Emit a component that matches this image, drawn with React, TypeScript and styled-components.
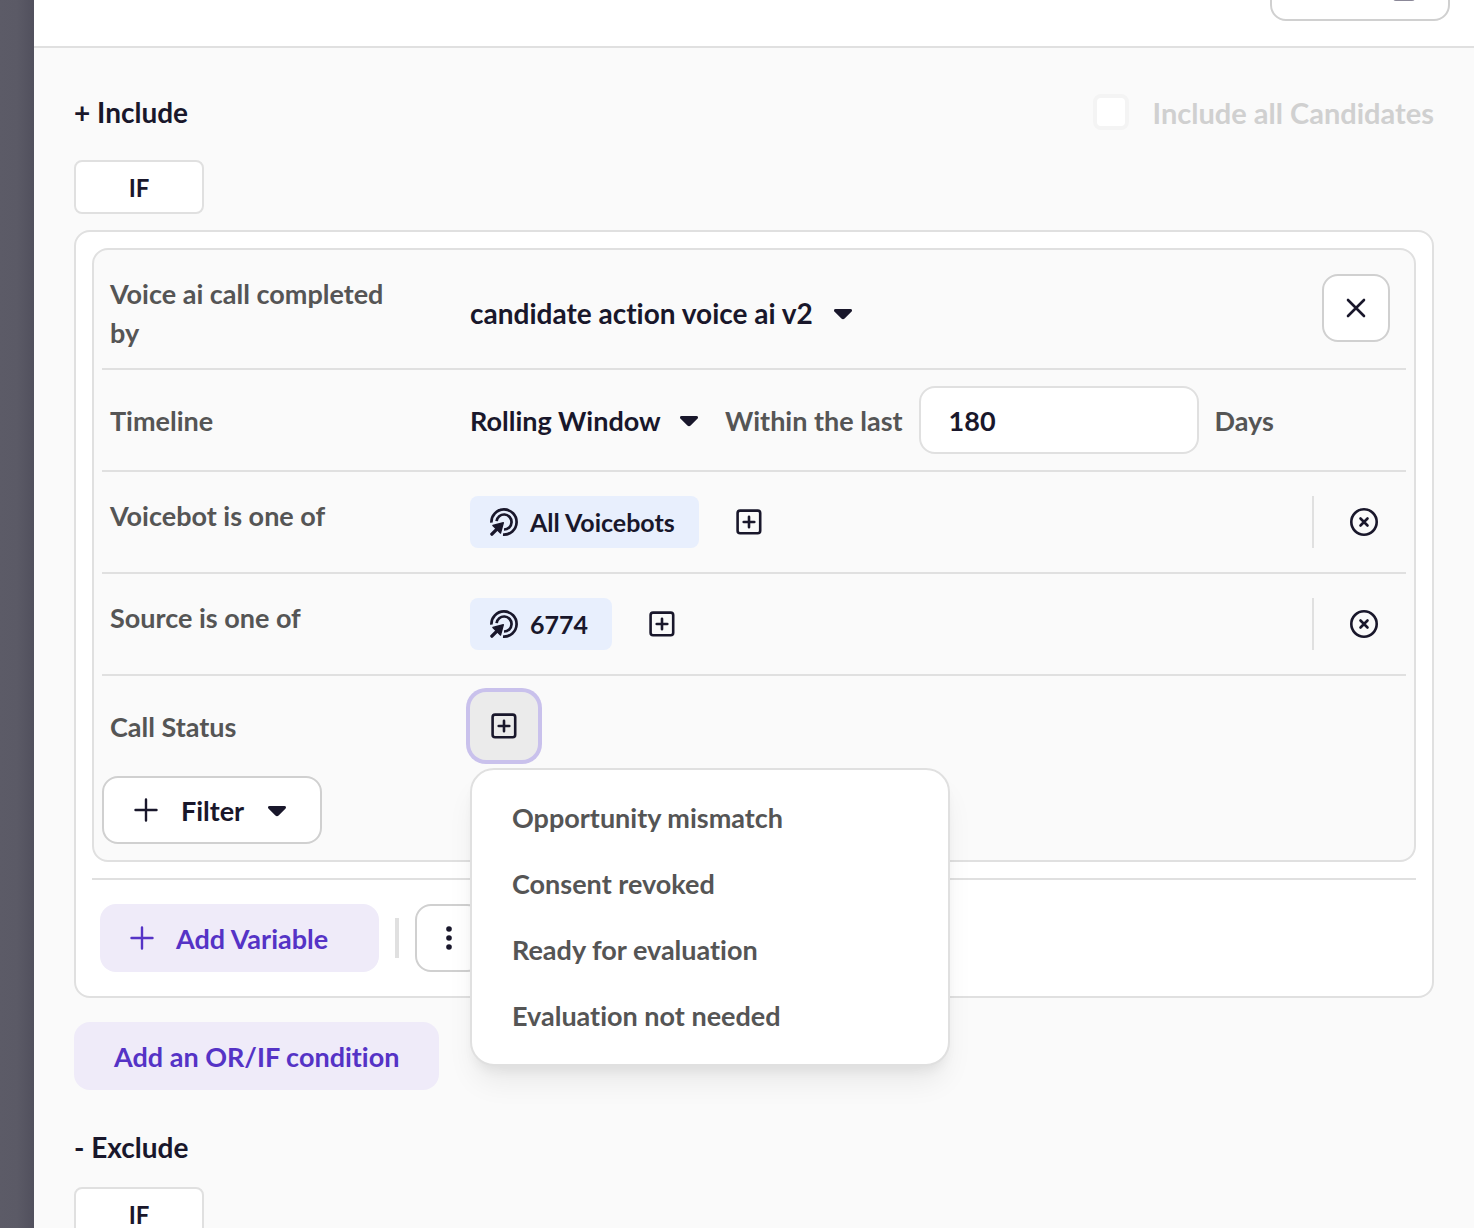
import React from "react";
import styled, { createGlobalStyle, css } from "styled-components";

const ink = "#19172b";
const grey = "#555555";
const line = "#e0e0e0";
const edge = "#d0d0d0";
const violet = "#5533c6";
const lilac = "#efebf9";
const surface = "#fafafa";

const GlobalStyle = createGlobalStyle`
  *, *::before, *::after { box-sizing: border-box; }
  html, body { margin: 0; }
  body, button, input, select {
    font-family: Lato, "Open Sans", sans-serif;
    font-size: 27px;
    font-weight: 700;
    font-variant-ligatures: none;
    line-height: 39px;
    color: ${ink};
  }
  body { background: ${surface}; }
`;

const Page = styled.div`
  display: flex;
  height: 100vh;
  overflow: hidden;
`;

const Backdrop = styled.div`
  flex: 0 0 34px;
  background: linear-gradient(90deg, #5c5b67 0%, #5b5a66 50%, #51505d 100%);
`;

const Drawer = styled.main`
  flex: 1;
  min-width: 0;
  background: ${surface};
`;

const Header = styled.header`
  display: flex;
  justify-content: flex-end;
  align-items: flex-end;
  height: 48px;
  padding: 0 24px 25px;
  overflow: hidden;
  background: #fff;
  border-bottom: 2px solid ${line};
`;

const Body = styled.div`
  padding: 40px;
`;

const outlined = css`
  background: #fff;
  border: 2px solid ${edge};
  border-radius: 16px;
`;

const HeaderButton = styled.button`
  ${outlined}
  display: flex;
  flex-shrink: 0;
  align-items: center;
  justify-content: flex-end;
  width: 180px;
  height: 68px;
  padding: 0 32px;
`;

const TitleRow = styled.div`
  display: flex;
  align-items: center;
  justify-content: space-between;
  height: 48px;
`;

const Title = styled.h2`
  margin: 0;
  font-size: 28px;
  font-weight: 700;
`;

const AllLabel = styled.label`
  display: flex;
  align-items: center;
  gap: 24px;
  font-size: 29px;
  color: #d0d0d0;
`;

const Checkbox = styled.input`
  appearance: none;
  width: 36px;
  height: 36px;
  margin: 0;
  background: #fff;
  border: 4px solid #f4f4f4;
  border-radius: 8px;
`;

const IfTag = styled.button<{ $tight?: boolean }>`
  display: block;
  width: 130px;
  height: 54px;
  margin: ${(p) => (p.$tight ? 16 : 24)}px 0 16px;
  padding: 0;
  font-size: 24px;
  background: #fff;
  border: 2px solid ${line};
  border-radius: 8px;
`;

const Group = styled.section`
  padding: 16px;
  background: #fff;
  border: 2px solid ${line};
  border-radius: 16px;
`;

const Rule = styled.div`
  padding: 0 8px 16px;
  background: ${surface};
  border: 2px solid ${line};
  border-radius: 16px;
`;

const Row = styled.div<{ $top?: number; $bottom?: number; $center?: boolean; $last?: boolean }>`
  display: grid;
  grid-template-columns: 360px 1fr auto;
  align-items: ${(p) => (p.$center ? "center" : "start")};
  padding: ${(p) => p.$top ?? 24}px 16px ${(p) => p.$bottom ?? 24}px 8px;
  border-bottom: ${(p) => (p.$last ? 0 : 2)}px solid ${line};
`;

const RowLabel = styled.span`
  padding-right: 60px;
  color: ${grey};
`;

const Field = styled.div`
  display: flex;
  align-items: center;
  align-self: center;
  gap: 16px;
`;

const Muted = styled.label`
  color: ${grey};
`;

const SelectBox = styled.span`
  display: grid;
  align-items: center;
  margin-right: 10px;
  > * { grid-area: 1 / 1; }
  > svg { justify-self: end; pointer-events: none; }
`;

const Select = styled.select<{ $large?: boolean }>`
  appearance: none;
  padding: 0 38px 0 0;
  font-size: ${(p) => (p.$large ? 28 : 27)}px;
  background: transparent;
  border: 0;
`;

const NumberInput = styled.input`
  width: 280px;
  height: 68px;
  padding: 0 28px;
  background: #fff;
  border: 2px solid ${line};
  border-radius: 16px;
`;

const CloseButton = styled.button`
  ${outlined}
  display: grid;
  place-items: center;
  width: 68px;
  height: 68px;
  padding: 0;
`;

const Chip = styled.button`
  display: flex;
  align-items: center;
  gap: 12px;
  height: 52px;
  padding: 0 24px 0 20px;
  font-size: 25px;
  background: #e8effd;
  border: 0;
  border-radius: 8px;
`;

const IconButton = styled.button<{ $wide?: boolean }>`
  display: grid;
  place-items: center;
  width: ${(p) => (p.$wide ? 68 : 52)}px;
  height: 52px;
  padding: 0;
  background: transparent;
  border: 0;
`;

const RowEnd = styled.div`
  padding-left: 24px;
  border-left: 2px solid ${line};
`;

const MenuAnchor = styled.div`
  position: relative;
`;

const ActiveButton = styled.button`
  display: grid;
  place-items: center;
  width: 68px;
  height: 68px;
  padding: 0;
  background: #ebebeb;
  border: 0;
  border-radius: 16px;
  box-shadow: 0 0 0 4px #c9c1ec;
`;

const Menu = styled.ul`
  position: absolute;
  top: 76px;
  left: 0;
  z-index: 2;
  width: 480px;
  margin: 0;
  padding: 14px 0 16px;
  list-style: none;
  background: #fff;
  border: 2px solid ${line};
  border-radius: 24px;
  box-shadow: 0 20px 30px -6px rgba(0, 0, 0, 0.08), 0 8px 12px -4px rgba(0, 0, 0, 0.06);
`;

const MenuItem = styled.button`
  display: block;
  width: 100%;
  height: 66px;
  padding: 0 40px;
  text-align: left;
  color: ${grey};
  background: transparent;
  border: 0;
`;

const FilterButton = styled.button`
  ${outlined}
  display: flex;
  align-items: center;
  justify-content: space-between;
  width: 220px;
  height: 68px;
  padding: 0 33px 0 30px;
`;

const Footer = styled.div`
  display: flex;
  align-items: center;
  gap: 16px;
  margin-top: 16px;
  padding: 24px 8px 8px;
  border-top: 2px solid ${line};
`;

const SoftButton = styled.button<{ $min?: number }>`
  display: inline-flex;
  align-items: center;
  gap: 22px;
  min-width: ${(p) => p.$min ?? 0}px;
  height: 68px;
  padding: 0 40px;
  color: ${violet};
  background: ${lilac};
  border: 0;
  border-radius: 16px;
  > svg { margin-left: -10px; }
`;

const Separator = styled.span`
  width: 4px;
  height: 40px;
  background: ${line};
`;

const OrRow = styled.div`
  display: flex;
  padding: 24px 0 33px;
`;

const Caret = () => (
  <svg width="20" height="16" viewBox="0 0 20 16" aria-hidden="true">
    <path d="M2.500 4h15c1.400 0 2 1.400 1.100 2.500l-7 7c-1 1-2.200 1-3.200 0l-7-7C.5 5.400 1.100 4 2.500 4z" fill={ink} />
  </svg>
);

const Plus = () => (
  <svg width="24" height="24" viewBox="0 0 24 24" fill="none" stroke="currentColor" strokeWidth="2.400" strokeLinecap="round" aria-hidden="true">
    <path d="M12 1.500v21M1.500 12h21" />
  </svg>
);

const PlusBox = () => (
  <svg width="26" height="26" viewBox="0 0 26 26" fill="none" stroke={ink} strokeWidth="2.600" strokeLinecap="round" aria-hidden="true">
    <rect x="1.600" y="1.600" width="22.600" height="22.600" rx="2.500" />
    <path d="M13 7.700v10.600M7.700 13h10.600" />
  </svg>
);

const Cross = () => (
  <svg width="20" height="20" viewBox="0 0 20 20" fill="none" stroke={ink} strokeWidth="2.600" strokeLinecap="round" aria-hidden="true">
    <path d="M2 2l16 16M18 2L2 18" />
  </svg>
);

const CircleCross = () => (
  <svg width="28" height="28" viewBox="0 0 28 28" fill="none" stroke={ink} strokeWidth="2.600" strokeLinecap="round" aria-hidden="true">
    <circle cx="14" cy="14" r="12.700" />
    <path d="M10.500 10.500l7 7M17.500 10.500l-7 7" />
  </svg>
);

const Target = () => (
  <svg width="28" height="28" viewBox="0 0 28 28" fill="none" stroke={ink} strokeWidth="2.700" aria-hidden="true">
    <path d="M1.400 14.600A12.600 12.600 0 1 1 13 26.600" />
    <path d="M6.600 13.200A7.500 7.500 0 1 1 14 21.500" />
    <path d="M1.900 26.100l6-6" strokeWidth="3.400" strokeLinecap="round" />
    <path d="M13.300 14.700l-2.800 10.300-7.600-7.600z" fill={ink} strokeWidth="1.400" strokeLinejoin="round" />
  </svg>
);

const Dots = () => (
  <svg width="8" height="24" viewBox="0 0 8 24" fill={ink} aria-hidden="true">
    <circle cx="4" cy="3" r="2.800" />
    <circle cx="4" cy="12" r="2.800" />
    <circle cx="4" cy="21" r="2.800" />
  </svg>
);

const Square = () => (
  <svg width="24" height="30" viewBox="0 0 24 30" fill="none" stroke="#8b8898" strokeWidth="2" aria-hidden="true">
    <rect x="2" y="8" width="20" height="20" rx="2" />
  </svg>
);

const statuses = ["Opportunity mismatch", "Consent revoked", "Ready for evaluation", "Evaluation not needed"];

function TagRow({ label, value }: { label: string; value: string }) {
  return (
    <Row>
      <RowLabel>{label}</RowLabel>
      <Field>
        <Chip type="button">
          <Target />
          {value}
        </Chip>
        <IconButton type="button" $wide aria-label="Add">
          <PlusBox />
        </IconButton>
      </Field>
      <RowEnd>
        <IconButton type="button" aria-label="Remove">
          <CircleCross />
        </IconButton>
      </RowEnd>
    </Row>
  );
}

export default function App() {
  return (
    <Page>
      <GlobalStyle />
      <Backdrop />
      <Drawer>
        <Header>
          <HeaderButton type="button" aria-label="Options">
            <Square />
          </HeaderButton>
        </Header>
        <Body>
          <TitleRow>
            <Title>+ Include</Title>
            <AllLabel>
              <Checkbox type="checkbox" disabled />
              Include all Candidates
            </AllLabel>
          </TitleRow>
          <IfTag type="button">IF</IfTag>
          <Group>
            <Rule>
              <Row $bottom={16}>
                <RowLabel as="label" htmlFor="action">Voice ai call completed by</RowLabel>
                <Field>
                  <SelectBox>
                    <Select id="action" $large>
                      <option>candidate action voice ai v2</option>
                    </Select>
                    <Caret />
                  </SelectBox>
                </Field>
                <CloseButton type="button" aria-label="Close">
                  <Cross />
                </CloseButton>
              </Row>
              <Row $top={16} $bottom={16} $center>
                <RowLabel as="label" htmlFor="timeline">Timeline</RowLabel>
                <Field>
                  <SelectBox>
                    <Select id="timeline">
                      <option>Rolling Window</option>
                    </Select>
                    <Caret />
                  </SelectBox>
                  <Muted htmlFor="days">Within the last</Muted>
                  <NumberInput id="days" type="text" inputMode="numeric" defaultValue="180" />
                  <Muted htmlFor="days">Days</Muted>
                </Field>
              </Row>
              <TagRow label="Voicebot is one of" value="All Voicebots" />
              <TagRow label="Source is one of" value="6774" />
              <Row $top={16} $bottom={16} $center $last>
                <RowLabel>Call Status</RowLabel>
                <MenuAnchor>
                  <ActiveButton type="button" aria-label="Add" aria-expanded="true">
                    <PlusBox />
                  </ActiveButton>
                  <Menu>
                    {statuses.map((s) => (
                      <li key={s}>
                        <MenuItem type="button">{s}</MenuItem>
                      </li>
                    ))}
                  </Menu>
                </MenuAnchor>
              </Row>
              <FilterButton type="button">
                <Plus />
                Filter
                <Caret />
              </FilterButton>
            </Rule>
            <Footer>
              <SoftButton type="button" $min={279}>
                <Plus />
                Add Variable
              </SoftButton>
              <Separator />
              <CloseButton type="button" aria-label="More">
                <Dots />
              </CloseButton>
            </Footer>
          </Group>
          <OrRow>
            <SoftButton type="button">Add an OR/IF condition</SoftButton>
          </OrRow>
          <TitleRow>
            <Title>- Exclude</Title>
          </TitleRow>
          <IfTag type="button" $tight>IF</IfTag>
        </Body>
      </Drawer>
    </Page>
  );
}
